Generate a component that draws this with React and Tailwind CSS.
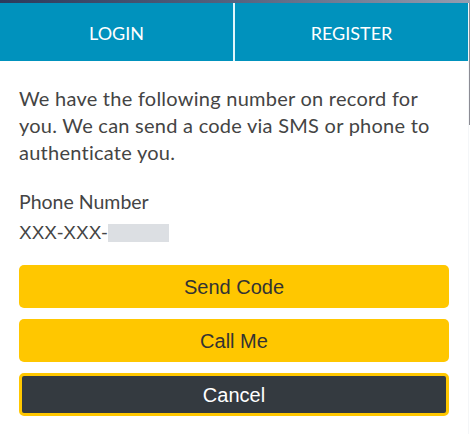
import React from "react";

export default function App() {
  const lato = { fontFamily: "Lato, 'Noto Sans', sans-serif" };
  const arial = { fontFamily: "'Liberation Sans', Arial, sans-serif" };
  return (
    <div className="w-[470px] h-[434px] bg-white overflow-hidden flex flex-col">
      <div className="h-[3px] w-full bg-gradient-to-r from-[#2c3a5c] via-[#56637f] to-[#959db0]" />
      <div className="flex flex-1">
        <div className="w-[468px] flex flex-col">
          <div className="flex h-[58px]" style={lato}>
            <div className="w-[233px] bg-[#0092bd] flex items-center justify-center pt-[3px] text-white text-[18px]">
              LOGIN
            </div>
            <div className="w-[2px] bg-[#dff6fb]" />
            <div className="flex-1 bg-[#0092bd] flex items-center justify-center pt-[3px] text-white text-[18px]">
              REGISTER
            </div>
          </div>
          <div className="px-[19px] pt-[24px]">
            <p className="text-[20px] leading-[27px] tracking-[0.25px] text-[#444444]" style={lato}>
              We have the following number on record for you. We can send a code via SMS or phone to authenticate you.
            </p>
            <div className="mt-[22px] text-[19.5px] leading-[27px] text-[#444444]" style={lato}>
              Phone Number
            </div>
            <div className="mt-[4px] text-[19px] leading-[27px] text-[#444444] flex items-center" style={arial}>
              <span>XXX-XXX-</span>
              <span className="inline-block w-[61px] h-[18px] bg-[#dcdfe3]" />
            </div>
            <div className="mt-[19px] flex flex-col gap-[11px]" style={arial}>
              <button className="h-[43px] w-full rounded-[5px] bg-[#ffc700] text-[20px] text-[#333333]">
                Send Code
              </button>
              <button className="h-[43px] w-full rounded-[5px] bg-[#ffc700] text-[20px] text-[#333333]">
                Call Me
              </button>
              <button className="h-[43px] w-full rounded-[5px] bg-[#343a40] border-[3px] border-[#ffc700] text-[20px] text-white">
                Cancel
              </button>
            </div>
          </div>
        </div>
        <div className="w-[1px] bg-[#f4f6f8]" />
        <div className="w-[1px] h-[122px] bg-[#8c8c94]" />
      </div>
    </div>
  );
}
